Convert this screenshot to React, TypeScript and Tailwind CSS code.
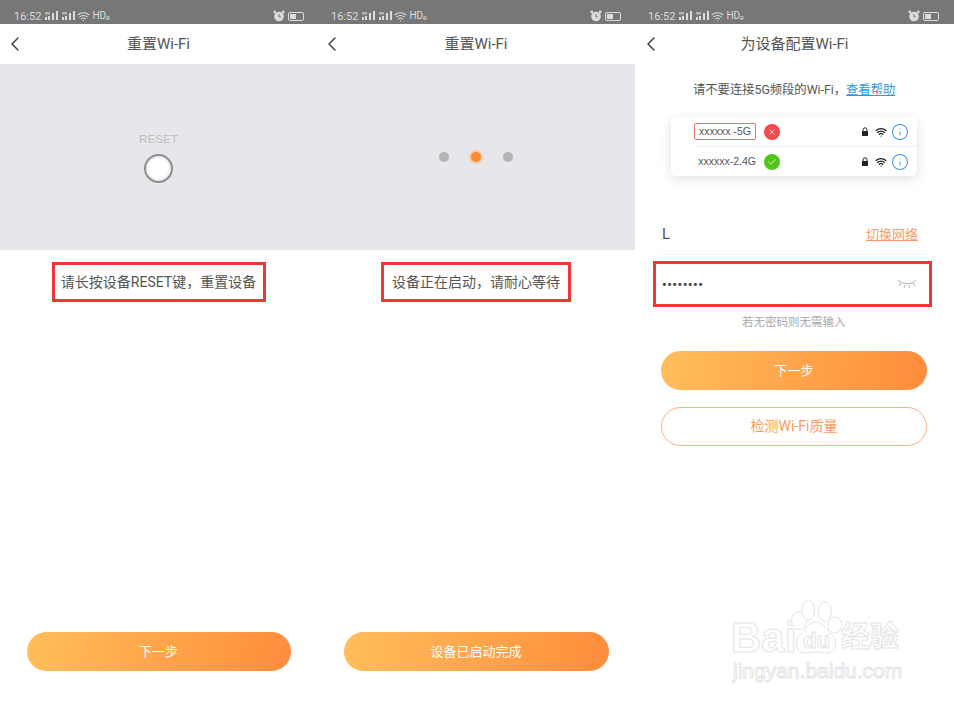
import { ChevronLeft, Wifi, X, Check, Info } from "lucide-react"

const cjk = "font-['Roboto','Noto_Sans_CJK_SC',sans-serif]"

function Signal() {
    return (
        <svg width="14" height="10" viewBox="0 0 14 10" fill="#dcdcdc">
            <rect x="0" y="6" width="2" height="3" />
            <rect x="3" y="5" width="2" height="4" />
            <rect x="7" y="2" width="2" height="7" />
            <rect x="11" y="0" width="2" height="9" />
            <rect x="0" y="1" width="5" height="2.5" opacity="0.6" />
        </svg>
    )
}

function StatusBar({ pad }: { pad: string }) {
    return (
        <div className={`flex h-6 items-center bg-[#777777] pt-[8px] text-[11px] text-[#dcdcdc] ${pad}`}>
            <span className="mr-[4px] leading-none">16:52</span>
            <span className="mr-[3px] flex"><Signal /></span>
            <span className="mr-[1px] flex"><Signal /></span>
            <Wifi size={13} strokeWidth={2} className="mr-[2px] text-[#dcdcdc]" />
            <span className="text-[10px] leading-none">HDₑ</span>
            <svg className="ml-auto" width="12" height="12" viewBox="0 0 12 12">
                <circle cx="6" cy="6.5" r="4.8" fill="#dcdcdc" />
                <path d="M6 4v2.8h1.8" stroke="#777777" strokeWidth="1" fill="none" />
                <circle cx="1.8" cy="2" r="1.4" fill="#dcdcdc" />
                <circle cx="10.2" cy="2" r="1.4" fill="#dcdcdc" />
            </svg>
            <span className="ml-[3px] flex h-[9px] w-[16px] items-center rounded-[2px] border border-[#dcdcdc] p-[1px]">
                <span className="h-full w-[6px] bg-[#dcdcdc]" />
            </span>
        </div>
    )
}

function Header({ title, iconPad }: { title: string; iconPad: string }) {
    return (
        <div className="relative flex h-10 items-center justify-center bg-white text-[15px] text-[#555555]">
            <ChevronLeft size={24} strokeWidth={1.5} className={`absolute top-[8px] text-[#444444] ${iconPad}`} />
            <span>{title}</span>
        </div>
    )
}

function Message({ text, width }: { text: string; width: string }) {
    return (
        <div className={`mx-auto mt-3 flex h-[40px] items-center justify-center border-[3px] border-[#f33535] text-[14px] text-[#555555] ${width}`}>
            {text}
        </div>
    )
}

function MainButton({ label, width }: { label: string; width: string }) {
    return (
        <div className={`flex h-[39px] items-center justify-center rounded-full bg-[linear-gradient(100deg,#ffbe5c,#ff8c3c)] text-[13px] text-white ${width}`}>
            {label}
        </div>
    )
}

function CardRow({ name, ok, boxed }: { name: string; ok: boolean; boxed?: boolean }) {
    return (
        <div className="flex h-[29px] items-center pr-[8px]">
            <div className="flex w-[85px] justify-end">
                <span className={`whitespace-nowrap font-['Liberation_Sans',sans-serif] text-[10.5px] leading-[15px] text-[#555555] ${boxed ? "rounded-[2px] border border-[#f56c6c] px-[4px]" : ""}`}>
                    {name}
                </span>
            </div>
            <span className={`ml-[8px] flex size-4 items-center justify-center rounded-full ${ok ? "bg-[#52c41a]" : "bg-[#f5484d]"}`}>
                {ok ? <Check size={10} color="#e8ffe0" /> : <X size={10} color="#ffe5e5" />}
            </span>
            <svg className="ml-auto" width="8" height="9" viewBox="0 0 8 9">
                <path d="M2 4V2.8a2 2 0 0 1 4 0V4" fill="none" stroke="#222222" />
                <rect x="1" y="4" width="6" height="5" rx="0.5" fill="#222222" />
            </svg>
            <Wifi size={12} strokeWidth={2.5} color="#222222" className="ml-[6px]" />
            <Info size={18} strokeWidth={1.4} color="#3f97f2" className="ml-[4px]" />
        </div>
    )
}

function Watermark() {
    const outline = "text-transparent [-webkit-text-stroke:1px_#e4e4e4]"
    return (
        <div className="pointer-events-none absolute left-[731px] top-[598px] h-[84px] w-[175px] font-['Liberation_Sans','Noto_Sans_CJK_SC',sans-serif]">
            <span className={`absolute left-0 top-[19px] text-[42px] font-bold leading-[42px] ${outline}`}>Bai</span>
            <svg className="absolute left-[59px] top-0" width="54" height="58" viewBox="0 0 54 58" fill="white" stroke="#e4e4e4">
                <ellipse cx="9" cy="22.7" rx="7.5" ry="9" />
                <ellipse cx="18.3" cy="12" rx="6.5" ry="10" />
                <ellipse cx="35" cy="13.7" rx="6.5" ry="10" />
                <ellipse cx="45" cy="27" rx="7" ry="8" />
                <path d="M26 24c-8 0-10 8-15 12-7 5-7 19 5 19 4 0 7-1 10-1s6 1 10 1c12 0 12-14 5-19-5-4-7-12-15-12z" />
            </svg>
            <span className={`absolute left-[72px] top-[32px] text-[22px] font-bold leading-[22px] ${outline}`}>du</span>
            <span className={`absolute left-[110px] top-[21px] text-[29px] font-bold leading-[36px] ${outline}`}>经验</span>
            <span className={`absolute left-[2px] top-[60px] text-[21px] leading-[26px] ${outline}`}>jingyan.baidu.com</span>
        </div>
    )
}

export default function App() {
    return (
        <div className={`relative flex h-[702px] w-[954px] overflow-hidden bg-white ${cjk}`}>
            {/* step 1 */}
            <div className="flex w-[317px] flex-col">
                <StatusBar pad="pl-[14px] pr-[13px]" />
                <Header title="重置Wi-Fi" iconPad="left-[3px]" />
                <div className="flex h-[186px] flex-col items-center bg-[#e6e7eb] pt-[68px]">
                    <span className="font-['Liberation_Sans',sans-serif] text-[11.5px] leading-[14px] text-[#bdbdbd]">RESET</span>
                    <span className="mt-[8px] size-[29px] rounded-full border-2 border-[#8f8f8f] bg-white shadow-[inset_0_0_3px_rgba(0,0,0,0.25)]" />
                </div>
                <Message text="请长按设备RESET键，重置设备" width="w-[214px]" />
                <div className="mt-auto flex justify-center pb-[31px]">
                    <MainButton label="下一步" width="w-[264px]" />
                </div>
            </div>

            {/* step 2 */}
            <div className="flex w-[318px] flex-col">
                <StatusBar pad="pl-[14px] pr-[14px]" />
                <Header title="重置Wi-Fi" iconPad="left-[3px]" />
                <div className="flex h-[186px] items-start justify-center gap-[22px] bg-[#e6e7eb] pt-[88px]">
                    <span className="size-[10px] rounded-full bg-[#b4b4b4]" />
                    <span className="size-[10px] rounded-full bg-[#ff8c2e] shadow-[0_0_3px_1px_#ffb070]" />
                    <span className="size-[10px] rounded-full bg-[#b4b4b4]" />
                </div>
                <Message text="设备正在启动，请耐心等待" width="w-[190px]" />
                <div className="mt-auto flex justify-center pb-[31px]">
                    <MainButton label="设备已启动完成" width="w-[265px]" />
                </div>
            </div>

            {/* step 3 */}
            <div className="flex w-[319px] flex-col">
                <StatusBar pad="pl-[13px] pr-[15px]" />
                <Header title="为设备配置Wi-Fi" iconPad="left-[4px]" />
                <div className="mt-[16px] pl-[58px] text-[12.3px] leading-[20px] text-[#555555]">
                    请不要连接5G频段的Wi-Fi，<span className="text-[#2f96e8] underline">查看帮助</span>
                </div>
                <div className="ml-[36px] mt-[17px] w-[246px] rounded-[5px] bg-white shadow-[0_3px_12px_rgba(0,0,0,0.12)]">
                    <CardRow name="xxxxxx -5G" ok={false} boxed />
                    <div className="ml-[25px] h-px bg-[#eeeeee]" />
                    <CardRow name="xxxxxx-2.4G" ok />
                </div>
                <div className="mx-[26px] mt-[44px] flex h-[35px] items-start justify-between border-b border-[#f2f2f2] pt-[3px]">
                    <span className="pl-[1px] text-[15px] leading-[22px] text-[#555555]">L</span>
                    <span className="pr-[10px] text-[13px] leading-[24px] text-[#ff9a66] underline">切换网络</span>
                </div>
                <div className="ml-[18px] mt-[6px] flex h-[46px] w-[279px] items-center justify-between border-[3px] border-[#f33535] pl-[6px] pr-[12px]">
                    <span className="text-[13px] font-bold leading-none tracking-[0.5px] text-[#444444]">••••••••</span>
                    <svg width="20" height="12" viewBox="0 0 20 12" fill="none" stroke="#b0b0b0" strokeWidth="1">
                        <path d="M1 2c5 5 13 5 18 0M4 5L2 8M8 7L7 10M12 7l1 3M16 5l2 3" />
                    </svg>
                </div>
                <div className="mt-[7px] pl-[107px] text-[11.5px] leading-[16px] text-[#a8a8a8]">若无密码则无需输入</div>
                <div className="ml-[26px] mt-[21px]">
                    <MainButton label="下一步" width="w-[266px]" />
                </div>
                <div className="ml-[26px] mt-[17px] flex h-[39px] w-[266px] items-center justify-center rounded-full border border-[#ffb184] text-[14px] text-[#ff9a5c]">
                    检测Wi-Fi质量
                </div>
            </div>

            <Watermark />
        </div>
    )
}
